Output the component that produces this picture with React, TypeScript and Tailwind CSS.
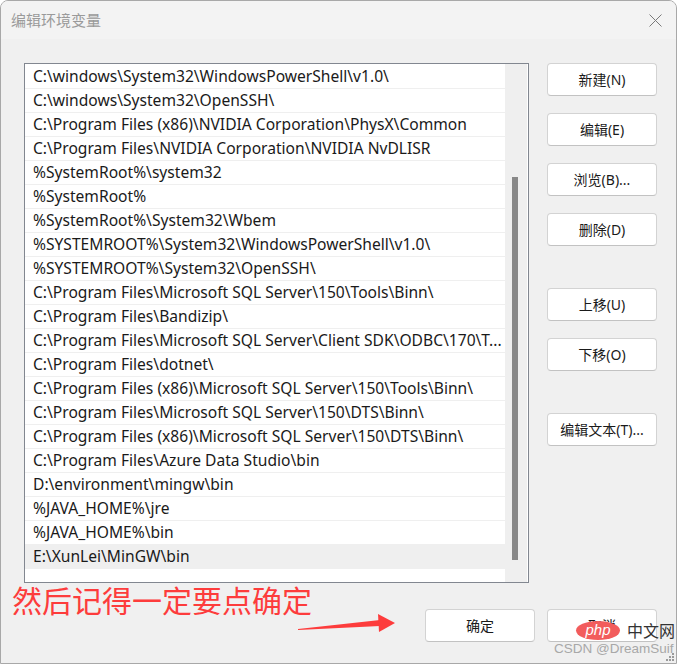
const rows = [
  "C:\\windows\\System32\\WindowsPowerShell\\v1.0\\",
  "C:\\windows\\System32\\OpenSSH\\",
  "C:\\Program Files (x86)\\NVIDIA Corporation\\PhysX\\Common",
  "C:\\Program Files\\NVIDIA Corporation\\NVIDIA NvDLISR",
  "%SystemRoot%\\system32",
  "%SystemRoot%",
  "%SystemRoot%\\System32\\Wbem",
  "%SYSTEMROOT%\\System32\\WindowsPowerShell\\v1.0\\",
  "%SYSTEMROOT%\\System32\\OpenSSH\\",
  "C:\\Program Files\\Microsoft SQL Server\\150\\Tools\\Binn\\",
  "C:\\Program Files\\Bandizip\\",
  "C:\\Program Files\\Microsoft SQL Server\\Client SDK\\ODBC\\170\\T...",
  "C:\\Program Files\\dotnet\\",
  "C:\\Program Files (x86)\\Microsoft SQL Server\\150\\Tools\\Binn\\",
  "C:\\Program Files\\Microsoft SQL Server\\150\\DTS\\Binn\\",
  "C:\\Program Files (x86)\\Microsoft SQL Server\\150\\DTS\\Binn\\",
  "C:\\Program Files\\Azure Data Studio\\bin",
  "D:\\environment\\mingw\\bin",
  "%JAVA_HOME%\\jre",
  "%JAVA_HOME%\\bin",
  "E:\\XunLei\\MinGW\\bin",
];

const font = "font-['Microsoft_YaHei','Noto_Sans','Noto_Sans_CJK_SC',sans-serif]";

function Btn({ label, className = "" }: { label: string; className?: string }) {
  return (
    <button
      className={`w-[110px] h-[33px] bg-white border border-[#d3d3d3] border-b-[#c2c2c2] rounded-[4px] text-[14px] text-[#1a1a1a] ${className}`}
    >
      {label}
    </button>
  );
}

export default function App() {
  return (
    <div
      className={`relative w-[677px] h-[664px] bg-[#f0f0f0] border border-[#a8a8a8] rounded-t-[8px] overflow-hidden flex flex-col ${font}`}
    >
      {/* title bar */}
      <div className="h-[38px] bg-[#f3f3f3] flex items-center justify-between pl-[10px] pr-[14px] shrink-0">
        <span className="text-[15px] text-[#9a9a9a] font-['Noto_Sans_CJK_SC',sans-serif]">编辑环境变量</span>
        <svg width="13" height="13" viewBox="0 0 13 13">
          <path d="M0.5 0.5 L12.5 12.5 M12.5 0.5 L0.5 12.5" stroke="#7a7a7a" strokeWidth="1" />
        </svg>
      </div>

      <div className="flex pt-[24px] pl-[23px] gap-[18px]">
        {/* list */}
        <div className="w-[505px] h-[520px] bg-white border border-[#828790] flex pt-[1px]">
          <div className="w-[480px] flex flex-col">
            {rows.map((r, i) => (
              <div
                key={i}
                className={`h-[24px] flex items-center pl-[8px] text-[15.6px] text-[#1a1a1a] whitespace-nowrap overflow-hidden border-b border-[#efefef] ${
                  i === rows.length - 1 ? "bg-[#efefef]" : ""
                }`}
              >
                {r}
              </div>
            ))}
          </div>
          <div className="w-[22px] -mt-[1px] bg-[#efefef] flex justify-center">
            <div className="w-[6px] h-[383px] bg-[#888888] mt-[113px] ml-[-2px]" />
          </div>
        </div>

        {/* side buttons */}
        <div className="flex flex-col">
          <div className="flex flex-col gap-[17px]">
            <Btn label="新建(N)" />
            <Btn label="编辑(E)" />
            <Btn label="浏览(B)..." />
            <Btn label="删除(D)" />
          </div>
          <div className="flex flex-col gap-[17px] mt-[42px]">
            <Btn label="上移(U)" />
            <Btn label="下移(O)" />
          </div>
          <Btn label="编辑文本(T)..." className="mt-[42px]" />
        </div>
      </div>

      {/* bottom buttons */}
      <div className="flex justify-end gap-[12px] pr-[19px] pt-[26px]">
        <Btn label="确定" />
        <Btn label="取消" />
      </div>

      {/* annotation */}
      <div className="absolute left-[11px] top-[578px] text-[30px] leading-[40px] text-[#fd3c3c] whitespace-nowrap font-['Noto_Sans_CJK_SC',sans-serif]">
        然后记得一定要点确定
      </div>
      <svg className="absolute left-[296px] top-[612px]" width="100" height="22" viewBox="296 612 100 22">
        <polygon points="297,628 379,619 379,625 297,629" fill="#fd3c3c" />
        <polygon points="377,613 394,622 378,631" fill="#fd3c3c" />
      </svg>

      {/* watermarks */}
      <div className="absolute left-[575px] top-[617px] flex items-center gap-[7px]">
        <div className="w-[44px] h-[19px] rounded-[50%] bg-[#f25c5c] flex items-center justify-center">
          <span className="text-white italic text-[15px] leading-none font-['Liberation_Sans',sans-serif] -mt-[2px]">php</span>
        </div>
        <span className="text-[16px] text-[#333] font-['Noto_Sans_CJK_SC',sans-serif]">中文网</span>
      </div>
      <div className="absolute left-[553px] top-[640px] text-[13.5px] leading-[16px] whitespace-nowrap text-[#a8a8a8] font-['Liberation_Sans',sans-serif]">
        CSDN @DreamSuif
      </div>
      <div className="absolute right-[2px] bottom-[2px] grid grid-cols-3 gap-[1px]">
        {[0, 0, 1, 0, 1, 1, 1, 1, 1].map((v, i) => (
          <div key={i} className={`w-[2px] h-[2px] ${v ? "bg-[#9a9a9a]" : ""}`} />
        ))}
      </div>
    </div>
  );
}
